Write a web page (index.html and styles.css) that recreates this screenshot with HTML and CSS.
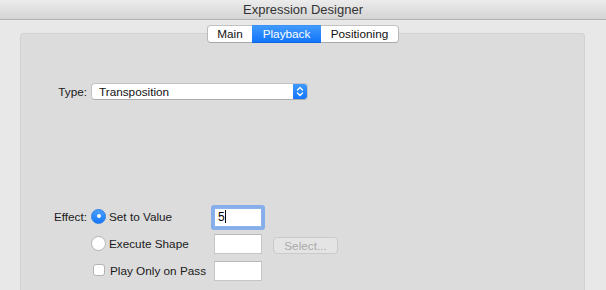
FILE: index.html
```html
<!DOCTYPE html>
<html lang="en">
<head>
    <meta charset="UTF-8">
    <title>Expression Designer</title>
    <link rel="stylesheet" href="styles.css">
</head>
<body>
    <div class="window">
        <div class="titlebar">Expression Designer</div>

        <div class="content">
            <div class="tabs">
                <div class="tab">Main</div>
                <div class="tab active">Playback</div>
                <div class="tab">Positioning</div>
            </div>

            <div class="panel">
                <div class="form-row type-row">
                    <span class="label">Type:</span>
                    <div class="popup">
                        <span class="popup-text">Transposition</span>
                        <span class="popup-arrows">
                            <svg width="8" height="11" viewBox="0 0 8 11">
                                <path d="M1.5 4 L4 1.5 L6.5 4 M1.5 7 L4 9.5 L6.5 7" fill="none" stroke="#fff" stroke-width="1.3" stroke-linecap="round" stroke-linejoin="round"/>
                            </svg>
                        </span>
                    </div>
                </div>

                <div class="form-row effect-row">
                    <span class="label">Effect:</span>
                    <div class="effect-grid">
                        <label class="option"><span class="radio checked"></span>Set to Value</label>
                        <div class="field focused">5<span class="caret"></span></div>
                        <div></div>

                        <label class="option"><span class="radio"></span>Execute Shape</label>
                        <div class="field"></div>
                        <div class="button disabled">Select...</div>

                        <label class="option"><span class="checkbox"></span>Play Only on Pass</label>
                        <div class="field"></div>
                        <div></div>
                    </div>
                </div>
            </div>
        </div>
    </div>
</body>
</html>
```

FILE: styles.css
```css
body {
    margin: 0;
    padding: 0;
    background-color: #e8e8e8;
    font-family: 'Liberation Sans', Arial, sans-serif;
    font-size: 11.75px;
    color: #1a1a1a;
    overflow: hidden;
}

.window {
    width: 606px;
    height: 290px;
    overflow: hidden;
}

.titlebar {
    height: 19px;
    line-height: 20px;
    text-align: center;
    font-size: 13px;
    color: #333;
    background: linear-gradient(#ececec, #d4d4d4);
    border-bottom: 1px solid #b4b4b4;
}

.content {
    padding-top: 5px;
}

/* Segmented tabs */
.tabs {
    display: flex;
    justify-content: center;
    position: relative;
    z-index: 1;
    margin-bottom: -10px;
}

.tab {
    height: 16px;
    line-height: 16px;
    padding: 0 8px;
    background-color: #fff;
    border-top: 1px solid #c2c2c2;
    border-bottom: 1px solid #a9a9a9;
    color: #111;
    text-align: center;
}

.tab:first-child {
    width: 28px;
    border-left: 1px solid #b9b9b9;
    border-radius: 4px 0 0 4px;
}

.tab.active {
    width: 53px;
    background: linear-gradient(#3f99fd, #1376fb);
    border-top-color: #3d92f6;
    border-bottom-color: #1366e0;
    color: #fff;
}

.tab:last-child {
    width: 61px;
    border-right: 1px solid #b9b9b9;
    border-radius: 0 4px 4px 0;
}

.panel {
    margin: 0 21px 0 20px;
    height: 257px;
    background-color: #dcdcdc;
    border: 1px solid #d2d2d2;
    border-bottom: none;
    border-radius: 4px 4px 0 0;
    padding-top: 49px;
    box-sizing: border-box;
}

.form-row {
    display: flex;
    align-items: flex-start;
}

.label {
    width: 66px;
    text-align: right;
    margin-right: 4px;
    color: #1a1a1a;
}

.type-row .label {
    line-height: 17px;
}

/* Popup button */
.popup {
    display: flex;
    width: 217px;
    height: 17px;
    box-sizing: border-box;
    background-color: #fff;
    border: 1px solid #c3c3c3;
    border-bottom-color: #adadad;
    border-radius: 4px;
    overflow: hidden;
}

.popup-text {
    flex: 1;
    padding-left: 7px;
    line-height: 15px;
    color: #111;
}

.popup-arrows {
    width: 14px;
    display: flex;
    align-items: center;
    justify-content: center;
    background: linear-gradient(#3f99fd, #1376fb);
}

/* Effect section */
.effect-row {
    margin-top: 107px;
}

.effect-row .label {
    line-height: 19px;
}

.effect-grid {
    display: grid;
    grid-template-columns: 123px 48px 76px;
    grid-auto-rows: 20px;
    row-gap: 7px;
}

.option {
    display: flex;
    align-items: center;
    padding-bottom: 2px;
    color: #1a1a1a;
}

.radio {
    width: 15px;
    height: 15px;
    box-sizing: border-box;
    border-radius: 50%;
    background-color: #fff;
    border: 1px solid #b3b3b3;
    margin-right: 3px;
    flex-shrink: 0;
    position: relative;
}

.radio.checked {
    background: linear-gradient(#4a9ffd, #1677fb);
    border-color: #2a7ee8;
}

.radio.checked::after {
    content: "";
    position: absolute;
    left: 4.5px;
    top: 4.5px;
    width: 4px;
    height: 4px;
    border-radius: 50%;
    background-color: #fff;
}

.checkbox {
    width: 12px;
    height: 12px;
    box-sizing: border-box;
    background-color: #fff;
    border: 1px solid #b3b3b3;
    border-radius: 3px;
    margin: 0 5px 0 2px;
    flex-shrink: 0;
}

.field {
    height: 20px;
    box-sizing: border-box;
    background-color: #fff;
    border: 1px solid #c6c6c6;
    border-top-color: #b9b9b9;
    padding-left: 3px;
    line-height: 18px;
    color: #000;
    font-size: 12px;
}

.field.focused {
    margin-top: 1px;
    border-color: #8db4ea;
    box-shadow: 0 0 0 3px #86aeea;
    border-radius: 1px;
    height: 19px;
    line-height: 17px;
}

.caret {
    display: inline-block;
    width: 1px;
    height: 13px;
    background-color: #000;
    vertical-align: -2px;
}

.button {
    align-self: end;
    margin-left: 11px;
    height: 17px;
    line-height: 15px;
    box-sizing: border-box;
    text-align: center;
    border-radius: 4px;
}

.button.disabled {
    background-color: #e4e4e4;
    border: 1px solid #cacaca;
    color: #a9a9a9;
}
```
